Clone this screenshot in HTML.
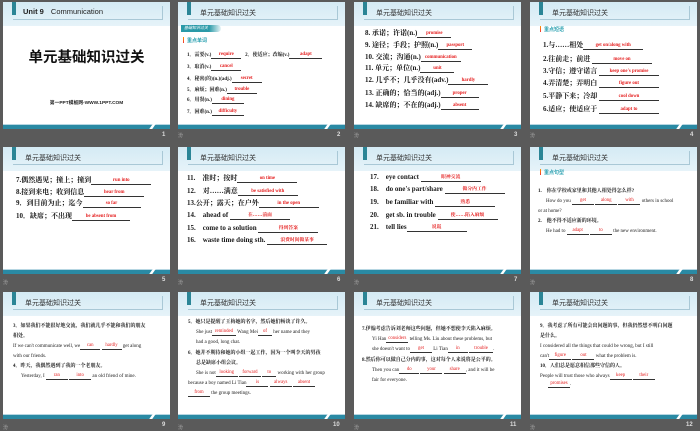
<!DOCTYPE html>
<html><head><meta charset="utf-8"><style>
*{margin:0;padding:0;box-sizing:border-box}
body{width:700px;height:431px;background:#5a5a5a;position:relative;overflow:hidden;font-family:"Liberation Serif","Noto Serif CJK SC",serif}
.s{position:absolute;width:167px;height:127px;background:#fff;overflow:hidden}
.hd{position:absolute;left:0;top:0;width:167px;height:24px;background:linear-gradient(#d4eaf4,#e6f3f9)}
.hb{position:absolute;left:10px;top:4px;width:150px;height:14px;border-right:1px solid #a9c8d6;border-bottom:1px solid #a9c8d6}
.tb{position:absolute;left:9px;top:0;width:4px;height:13px;background:#2b8596}
.ht{position:absolute;left:22px;top:6px;font:7px "Liberation Sans","Noto Sans CJK SC",sans-serif;color:#333;white-space:nowrap}
.ft{position:absolute;left:0;bottom:0;width:167px;height:4px;background:#2a8aa4}
.ft:before{content:"";position:absolute;left:0;top:-1px;width:167px;height:1px;background:#b6d6e2}
.ft:after{content:"";position:absolute;left:148px;top:-1px;width:3px;height:5px;background:#fff;transform:skewX(-35deg)}
.n{position:absolute;color:#ddd;font:bold 6px "Liberation Sans",sans-serif}
.ic{position:absolute;color:#aaa;font:5px "Noto Sans CJK SC",sans-serif}
.l{position:absolute;white-space:nowrap;font-weight:bold;color:#1a1a1a;font-size:7px;line-height:8px}
.sm{font-size:5px;line-height:7px}
.b{display:inline-block;border-bottom:0.7px solid #333;text-align:center;color:#e52020;font-size:4.8px;line-height:6px;vertical-align:1px;height:7px}
.k{position:absolute;font:bold 5px "Noto Sans CJK SC",sans-serif;color:#2aa0b0;white-space:nowrap}
.k:before{content:"";display:inline-block;width:1px;height:6px;background:linear-gradient(#f90,#e33);margin-right:3px;vertical-align:-1px}
</style></head><body>

<!-- slide 1 -->
<div class="s" style="left:3px;top:2px">
<div class="hd"></div><div class="hb"></div><div class="tb"></div>
<div class="ht" style="left:20px;top:5px;font-size:7.5px;font-weight:bold;color:#222">Unit 9 <span style="font-weight:normal;margin-left:5px">Communication</span></div>
<div style="position:absolute;left:0;width:167px;top:44px;text-align:center;font:bold 14.5px 'Noto Sans CJK SC',sans-serif;color:#111">单元基础知识过关</div>
<div style="position:absolute;left:0;width:167px;top:97px;text-align:center;font:bold 4.8px 'Liberation Sans','Noto Sans CJK SC',sans-serif;color:#222">第一PPT模板网-WWW.1PPT.COM</div>
<div class="ft"></div></div>
<div class="n" style="left:162px;top:132px">1</div>

<!-- slide 2 -->
<div class="s" style="left:178px;top:2px">
<div class="hd"></div><div class="hb"></div><div class="tb"></div><div class="ht">单元基础知识过关</div>
<div style="position:absolute;left:3px;top:23px;width:40px;height:7px;background:linear-gradient(90deg,#2a9aa8 70%,#e8f4f6);border-radius:0 4px 4px 0;font:4px 'Noto Sans CJK SC';color:#fff;padding-left:3px;line-height:7px;font-style:italic">基础知识过关</div>
<div class="k" style="left:5px;top:35px">重点单词</div>
<div class="l sm" style="left:9px;top:50px">1．需要(v.)<span class="b" style="width:30px">require</span>&nbsp;&nbsp;&nbsp;2．使适应；改编(v.)<span class="b" style="width:33px">adapt</span></div>
<div class="l sm" style="left:9px;top:62px">3．取消(v.)<span class="b" style="width:30px">cancel</span></div>
<div class="l sm" style="left:9px;top:74px">4．秘密(的)(n.)(adj.)<span class="b" style="width:30px">secret</span></div>
<div class="l sm" style="left:9px;top:85px">5．麻烦；困难(n.)<span class="b" style="width:30px">trouble</span></div>
<div class="l sm" style="left:9px;top:95px">6．用餐(n.)<span class="b" style="width:32px">dining</span></div>
<div class="l sm" style="left:9px;top:107px">7．困难(n.)<span class="b" style="width:32px">difficulty</span></div>
<div class="ft"></div></div>
<div class="ic" style="left:178px;top:132px">汾</div><div class="n" style="left:337px;top:132px">2</div>

<!-- slide 3 -->
<div class="s" style="left:354px;top:2px">
<div class="hd"></div><div class="hb"></div><div class="tb"></div><div class="ht">单元基础知识过关</div>
<div class="l" style="left:11px;top:27px">8. 承诺；许诺(n.)<span class="b" style="width:34px">promise</span></div>
<div class="l" style="left:11px;top:39px">9. 途径；手段；护照(n.)<span class="b" style="width:34px">passport</span></div>
<div class="l" style="left:11px;top:51px">10. 交流；沟通(n.)<span class="b" style="width:40px">communication</span></div>
<div class="l" style="left:11px;top:62px">11. 单元；单位(n.)<span class="b" style="width:34px">unit</span></div>
<div class="l" style="left:11px;top:74px">12. 几乎不；几乎没有(adv.)<span class="b" style="width:40px">hardly</span></div>
<div class="l" style="left:11px;top:87px">13. 正确的；恰当的(adj.)<span class="b" style="width:38px">proper</span></div>
<div class="l" style="left:11px;top:99px">14. 缺席的；不在的(adj.)<span class="b" style="width:38px">absent</span></div>
<div class="ft"></div></div>
<div class="ic" style="left:354px;top:132px">汾</div><div class="n" style="left:514px;top:132px">3</div>

<!-- slide 4 -->
<div class="s" style="left:530px;top:2px">
<div class="hd"></div><div class="hb"></div><div class="tb"></div><div class="ht">单元基础知识过关</div>
<div class="k" style="left:10px;top:24px">重点短语</div>
<div class="l" style="left:13px;top:39px">1.与……相处<span class="b" style="width:60px">get on/along with</span></div>
<div class="l" style="left:13px;top:53px">2.往前走；前进 <span class="b" style="width:60px">move on</span></div>
<div class="l" style="left:13px;top:65px">3.守信；遵守诺言 <span class="b" style="width:60px">keep one's promise</span></div>
<div class="l" style="left:13px;top:77px">4.弄清楚；弄明白 <span class="b" style="width:60px">figure out</span></div>
<div class="l" style="left:13px;top:90px">5.平静下来；冷却 <span class="b" style="width:60px">cool down</span></div>
<div class="l" style="left:13px;top:103px">6.适应；使适应于 <span class="b" style="width:60px">adapt to</span></div>
<div class="ft"></div></div>
<div class="ic" style="left:530px;top:132px">汾</div><div class="n" style="left:690px;top:132px">4</div>

<!-- slide 5 -->
<div class="s" style="left:3px;top:147px">
<div class="hd"></div><div class="hb"></div><div class="tb"></div><div class="ht">单元基础知识过关</div>
<div class="l" style="left:13px;top:29px">7.偶然遇见；撞上；撞到<span class="b" style="width:60px">run into</span></div>
<div class="l" style="left:13px;top:41px">8.接到来电；收到信息<span class="b" style="width:60px">hear from</span></div>
<div class="l" style="left:13px;top:52px">9．到目前为止；迄今<span class="b" style="width:58px">so far</span></div>
<div class="l" style="left:13px;top:65px">10．缺席；不出现<span class="b" style="width:58px">be absent from</span></div>
<div class="ft"></div></div>
<div class="ic" style="left:3px;top:279px">汾</div><div class="n" style="left:162px;top:277px">5</div>

<!-- slide 6 -->
<div class="s" style="left:178px;top:147px">
<div class="hd"></div><div class="hb"></div><div class="tb"></div><div class="ht">单元基础知识过关</div>
<div class="l" style="left:9px;top:27px">11.　准时；按时<span class="b" style="width:60px">on time</span></div>
<div class="l" style="left:9px;top:40px">12.　对……满意<span class="b" style="width:60px">be satisfied with</span></div>
<div class="l" style="left:9px;top:52px">13.公开；露天；在户外<span class="b" style="width:60px">in the open</span></div>
<div class="l" style="left:9px;top:64px">14.　ahead of <span class="b" style="width:60px">在……前面</span></div>
<div class="l" style="left:9px;top:77px">15.　come to a solution <span class="b" style="width:60px">得到答案</span></div>
<div class="l" style="left:9px;top:89px">16.　waste time doing sth. <span class="b" style="width:60px">浪费时间做某事</span></div>
<div class="ft"></div></div>
<div class="ic" style="left:178px;top:279px">汾</div><div class="n" style="left:337px;top:277px">6</div>

<!-- slide 7 -->
<div class="s" style="left:354px;top:147px">
<div class="hd"></div><div class="hb"></div><div class="tb"></div><div class="ht">单元基础知识过关</div>
<div class="l" style="left:16px;top:26px">17.　eye contact <span class="b" style="width:60px">眼神交流</span></div>
<div class="l" style="left:16px;top:38px">18.　do one's part/share <span class="b" style="width:60px">做分内工作</span></div>
<div class="l" style="left:16px;top:51px">19.　be familiar with <span class="b" style="width:60px">熟悉</span></div>
<div class="l" style="left:16px;top:64px">20.　get sb. in trouble <span class="b" style="width:60px">使……陷入麻烦</span></div>
<div class="l" style="left:16px;top:76px">21.　tell lies<span class="b" style="width:60px">说谎</span></div>
<div class="ft"></div></div>
<div class="ic" style="left:354px;top:279px">汾</div><div class="n" style="left:514px;top:277px">7</div>

<!-- slide 8 -->
<div class="s" style="left:530px;top:147px">
<div class="hd"></div><div class="hb"></div><div class="tb"></div><div class="ht">单元基础知识过关</div>
<div class="k" style="left:10px;top:22px">重点句型</div>
<div class="l sm" style="left:8px;top:41px">1.　你在学校或家里和其他人相处得怎么样?</div>
<div class="l sm" style="left:16px;top:51px;font-weight:normal">How do you <span class="b" style="width:22px">get</span> <span class="b" style="width:22px">along</span> <span class="b" style="width:22px">with</span> others in school</div>
<div class="l sm" style="left:8px;top:61px;font-weight:normal">or at home?</div>
<div class="l sm" style="left:8px;top:71px">2.　他不得不适应新的环境。</div>
<div class="l sm" style="left:16px;top:81px;font-weight:normal">He had to <span class="b" style="width:22px">adapt</span> <span class="b" style="width:22px">to</span> the new environment.</div>
<div class="ft"></div></div>
<div class="ic" style="left:530px;top:279px">汾</div><div class="n" style="left:690px;top:277px">8</div>

<!-- slide 9 -->
<div class="s" style="left:3px;top:292px">
<div class="hd"></div><div class="hb"></div><div class="tb"></div><div class="ht">单元基础知识过关</div>
<div class="l sm" style="left:10px;top:31px">3．如果我们不能很好地交流，我们就几乎不能和我们的朋友</div>
<div class="l sm" style="left:10px;top:41px">相处。</div>
<div class="l sm" style="left:10px;top:51px;font-weight:normal">If we can't communicate well, we<span class="b" style="width:20px">can</span> <span class="b" style="width:20px">hardly</span> get along</div>
<div class="l sm" style="left:10px;top:61px;font-weight:normal">with our friends.</div>
<div class="l sm" style="left:10px;top:71px">4．昨天，我偶然遇到了我的一个老朋友。</div>
<div class="l sm" style="left:18px;top:81px;font-weight:normal">Yesterday, I <span class="b" style="width:22px">ran</span> <span class="b" style="width:22px">into</span> an old friend of mine.</div>
<div class="ft"></div></div>
<div class="ic" style="left:3px;top:424px">汾</div><div class="n" style="left:162px;top:422px">9</div>

<!-- slide 10 -->
<div class="s" style="left:178px;top:292px">
<div class="hd"></div><div class="hb"></div><div class="tb"></div><div class="ht">单元基础知识过关</div>
<div class="l sm" style="left:10px;top:27px">5．她只是提醒了王梅她的名字，然后她们畅谈了许久。</div>
<div class="l sm" style="left:18px;top:37px;font-weight:normal">She just<span class="b" style="width:24px">reminded</span> Wang Mei<span class="b" style="width:14px">of</span> her name and they</div>
<div class="l sm" style="left:18px;top:47px;font-weight:normal">had a good, long chat.</div>
<div class="l sm" style="left:10px;top:58px">6．她并不期待和她的小组一起工作，因为一个叫李天的男孩</div>
<div class="l sm" style="left:18px;top:68px">总是缺席小组会议。</div>
<div class="l sm" style="left:18px;top:78px;font-weight:normal">She is not<span class="b" style="width:22px">looking</span> <span class="b" style="width:22px">forward</span> <span class="b" style="width:14px">to</span> working with her group</div>
<div class="l sm" style="left:10px;top:88px;font-weight:normal">because a boy named Li Tian<span class="b" style="width:22px">is</span> <span class="b" style="width:22px">always</span> <span class="b" style="width:22px">absent</span></div>
<div class="l sm" style="left:10px;top:98px;font-weight:normal"><span class="b" style="width:22px">from</span> the group meetings.</div>
<div class="ft"></div></div>
<div class="ic" style="left:178px;top:424px">汾</div><div class="n" style="left:333px;top:422px">10</div>

<!-- slide 11 -->
<div class="s" style="left:354px;top:292px">
<div class="hd"></div><div class="hb"></div><div class="tb"></div><div class="ht">单元基础知识过关</div>
<div class="l sm" style="left:8px;top:34px">7.伊翰考虑告诉刘老师这些问题，但她不想使李天陷入麻烦。</div>
<div class="l sm" style="left:18px;top:44px;font-weight:normal">Yi Han<span class="b" style="width:22px">considers</span> telling Ms. Liu about these problems, but</div>
<div class="l sm" style="left:18px;top:54px;font-weight:normal">she doesn't want to<span class="b" style="width:22px">get</span> Li Tian<span class="b" style="width:20px">in</span> <span class="b" style="width:24px">trouble</span>.</div>
<div class="l sm" style="left:8px;top:65px">8.然后你可以做自己分内的事，这对每个人来说将是公平的。</div>
<div class="l sm" style="left:18px;top:75px;font-weight:normal">Then you can<span class="b" style="width:20px">do</span> <span class="b" style="width:22px">your</span> <span class="b" style="width:22px">share</span>, and it will be</div>
<div class="l sm" style="left:18px;top:85px;font-weight:normal">fair for everyone.</div>
<div class="ft"></div></div>
<div class="ic" style="left:354px;top:424px">汾</div><div class="n" style="left:510px;top:422px">11</div>

<!-- slide 12 -->
<div class="s" style="left:530px;top:292px">
<div class="hd"></div><div class="hb"></div><div class="tb"></div><div class="ht">单元基础知识过关</div>
<div class="l sm" style="left:10px;top:31px">9．我考虑了所有可能会出问题的事，但我仍然想不明白问题</div>
<div class="l sm" style="left:10px;top:41px">是什么。</div>
<div class="l sm" style="left:10px;top:51px;font-weight:normal">I considered all the things that could be wrong, but I still</div>
<div class="l sm" style="left:10px;top:61px;font-weight:normal">can't<span class="b" style="width:22px">figure</span> <span class="b" style="width:22px">out</span> what the problem is.</div>
<div class="l sm" style="left:10px;top:71px">10．人们总是愿意相信那些守信的人。</div>
<div class="l sm" style="left:10px;top:81px;font-weight:normal">People will trust those who always<span class="b" style="width:22px">keep</span> <span class="b" style="width:22px">their</span></div>
<div class="l sm" style="left:18px;top:89px;font-weight:normal"><span class="b" style="width:22px">promises</span>.</div>
<div class="ft"></div></div>
<div class="ic" style="left:530px;top:424px">汾</div><div class="n" style="left:686px;top:422px">12</div>

</body></html>
